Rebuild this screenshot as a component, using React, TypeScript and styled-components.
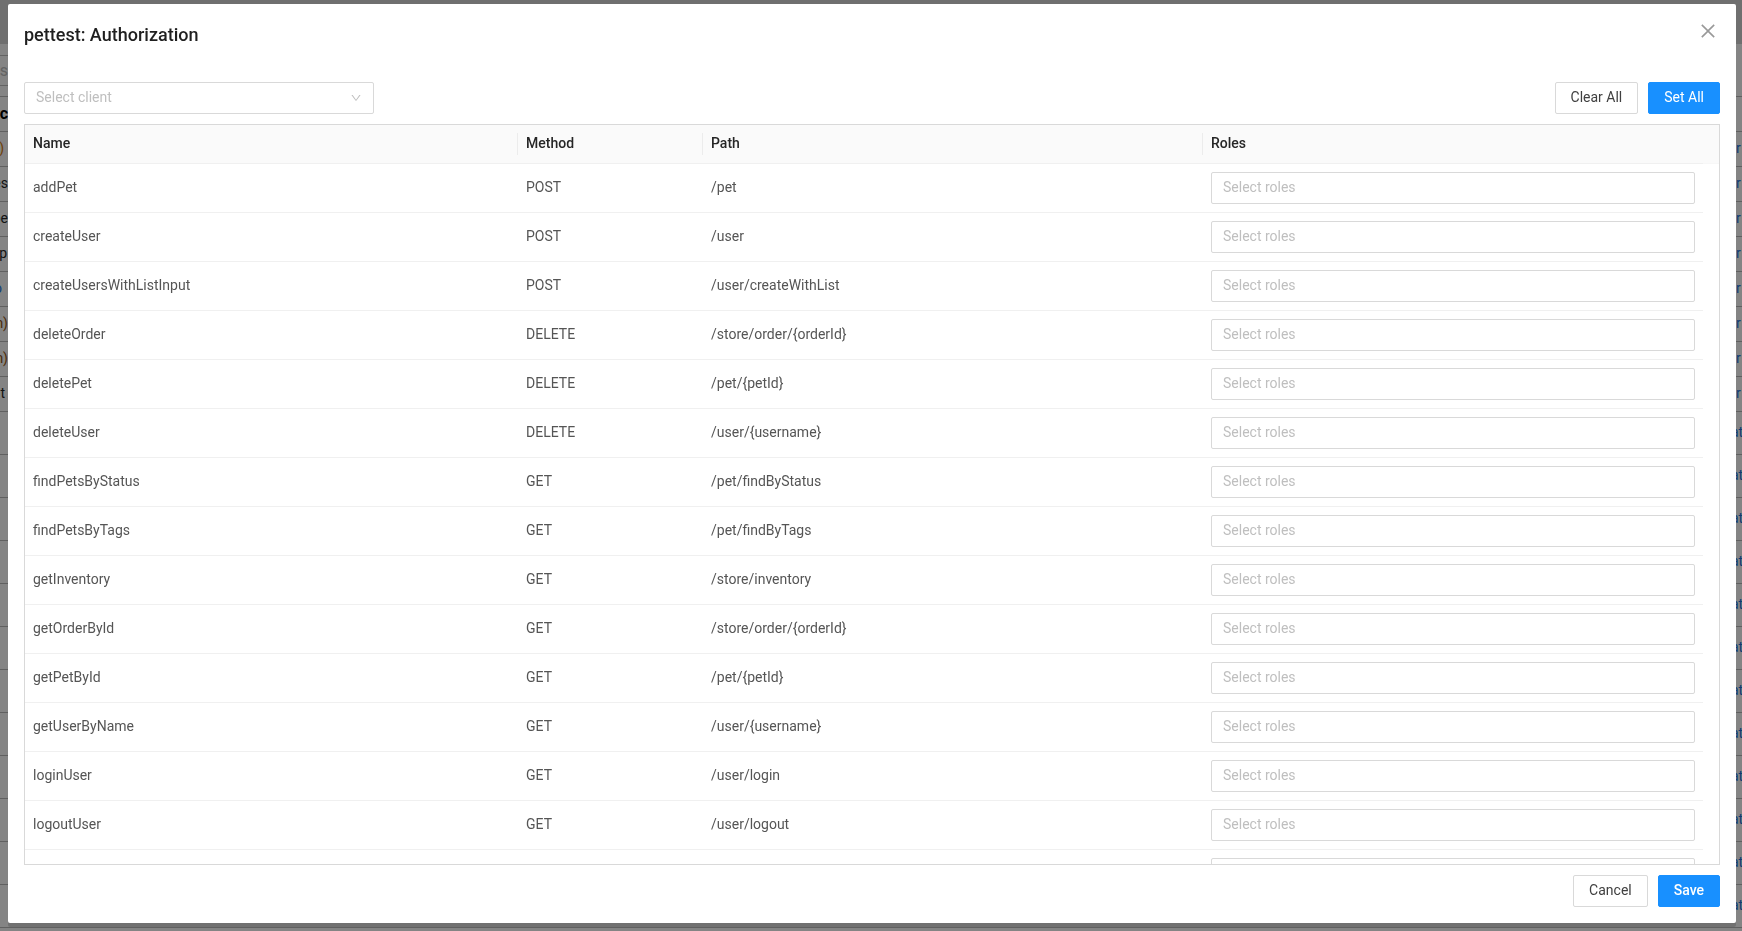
import React from 'react';
import styled, { createGlobalStyle } from 'styled-components';
import { AiOutlineClose, AiOutlineDown } from 'react-icons/ai';

const GlobalStyle = createGlobalStyle`
  html, body {
    margin: 0;
    padding: 0;
    height: 100%;
    overflow: hidden;
    background: #f0f0f0;
    font-family: Roboto, "Liberation Sans", sans-serif;
    font-size: 14px;
    color: #555;
  }
  * {
    box-sizing: border-box;
  }
`;

/* page behind the dialog */
const Page = styled.div`
  height: 931px;
  overflow: hidden;
  background: #f0f0f0;
`;

const TopBar = styled.div`
  height: 44px;
  background: #cbcbcb;
`;

const SearchArea = styled.div`
  height: 52px;
  padding-top: 11px;
`;

const SearchInput = styled.div`
  display: flex;
  align-items: center;
  justify-content: flex-end;
  width: 8px;
  height: 31px;
  border-top: 1px solid #b4b4b4;
  border-bottom: 1px solid #b4b4b4;
  font-size: 16px;
  color: #b4b4b4;
`;

const BackRow = styled.div<{ $height: number; $head?: boolean }>`
  display: flex;
  align-items: center;
  justify-content: space-between;
  height: ${({ $height }) => $height}px;
  padding-bottom: 2px;
  border-top: ${({ $head }) => ($head ? '1px solid #b0b0b0' : 'none')};
  border-bottom: 1px solid #b0b0b0;
  font-size: 14px;
`;

const BackLeft = styled.span<{ $tone: string; $bold?: boolean; $inset?: number }>`
  display: flex;
  justify-content: flex-end;
  width: 8px;
  padding-right: ${({ $inset }) => $inset ?? 0}px;
  white-space: nowrap;
  color: ${({ $tone }) => $tone};
  font-weight: ${({ $bold }) => ($bold ? 700 : 400)};
  font-size: ${({ $bold }) => ($bold ? 16 : 14)}px;
`;

const BackLink = styled.span<{ $shift: number }>`
  width: 6px;
  overflow: hidden;
  white-space: nowrap;
  color: #1a6fd0;
  text-indent: ${({ $shift }) => $shift}px;
`;

const Mask = styled.div`
  position: fixed;
  inset: 0;
  background: rgba(0, 0, 0, 0.45);
`;

/* dialog */
const Modal = styled.div`
  position: fixed;
  top: 4px;
  left: 8px;
  display: flex;
  flex-direction: column;
  width: 1728px;
  height: 919px;
  padding: 0 16px 16px;
  background: #fff;
  border-radius: 2px;
  box-shadow: 0 4px 0 rgba(0, 0, 0, 0.15);
`;

const CloseButton = styled.button`
  position: absolute;
  top: 0;
  right: 0;
  display: flex;
  align-items: center;
  justify-content: center;
  width: 56px;
  height: 54px;
  padding: 0;
  border: none;
  background: transparent;
  color: #999;
  font-size: 20px;
  cursor: pointer;
`;

const Title = styled.div`
  height: 78px;
  padding-top: 20px;
  font-size: 18px;
  line-height: 22px;
  font-weight: 500;
  color: #1f1f1f;
`;

const Toolbar = styled.div`
  display: flex;
  align-items: center;
  justify-content: space-between;
  margin-bottom: 10px;
`;

const ButtonGroup = styled.div`
  display: flex;
  gap: 10px;
`;

const Button = styled.button<{ $primary?: boolean; $regular?: boolean }>`
  height: 32px;
  padding: 0 15px 2px;
  border: 1px solid ${({ $primary }) => ($primary ? '#1890ff' : '#d9d9d9')};
  border-radius: 2px;
  background: ${({ $primary }) => ($primary ? '#1890ff' : '#fff')};
  color: ${({ $primary }) => ($primary ? '#fff' : '#404040')};
  font-family: inherit;
  font-size: 14px;
  font-weight: ${({ $primary, $regular }) => ($primary && !$regular ? 500 : 400)};
  cursor: pointer;
`;

const ClientSelect = styled.div`
  display: flex;
  align-items: center;
  justify-content: space-between;
  width: 350px;
  height: 32px;
  padding: 0 11px;
  border: 1px solid #d9d9d9;
  border-radius: 2px;
  color: #bfbfbf;
  font-size: 12px;
`;

const Placeholder = styled.span`
  margin-bottom: 2px;
  font-size: 14px;
  color: #bfbfbf;
`;

const TableFrame = styled.div`
  flex: 1;
  min-height: 0;
  overflow: hidden;
  border: 1px solid #d9d9d9;
`;

const HeadRow = styled.div`
  display: grid;
  grid-template-columns: 493px 185px 500px 500px 16px;
  height: 39px;
  background: #fafafa;
`;

const HeadCell = styled.div<{ $last?: boolean; $gutter?: boolean }>`
  position: relative;
  display: flex;
  align-items: center;
  padding: 0 8px 2px;
  border-bottom: 1px solid ${({ $gutter }) => ($gutter ? '#f7f7f7' : '#f0f0f0')};
  font-weight: 500;
  color: #262626;

  &::after {
    content: '';
    display: ${({ $last }) => ($last ? 'none' : 'block')};
    position: absolute;
    top: 8px;
    right: 0;
    width: 1px;
    height: 22px;
    background: #ececec;
  }
`;

const BodyRow = styled.div`
  display: grid;
  grid-template-columns: 493px 185px 500px 500px;
  height: 49px;
`;

const BodyCell = styled.div`
  display: flex;
  align-items: center;
  padding: 0 8px;
  border-bottom: 1px solid #f0f0f0;
`;

const CellText = styled.span`
  margin-bottom: 2px;
`;

const RoleSelect = styled.div`
  display: flex;
  align-items: center;
  width: 100%;
  height: 32px;
  padding: 0 11px;
  border: 1px solid #d9d9d9;
  border-radius: 2px;
`;

const Footer = styled.div`
  display: flex;
  justify-content: flex-end;
  gap: 10px;
  margin-top: 10px;
`;

const backRows = [
  { left: 'c', tone: '#000', bold: true },
  { left: ')', tone: '#c9720c', link: 'r', inset: 4 },
  { left: 'es', tone: '#262626', link: 'r' },
  { left: 'pe', tone: '#262626', link: 'r' },
  { left: 'p', tone: '#262626', link: 'r', inset: 1 },
  { left: 'o', tone: '#1a6fd0', link: 'r', inset: 6 },
  { left: 'n)', tone: '#8a4f10', link: 'r' },
  { left: 'n)', tone: '#8a4f10', link: 'r' },
  { left: 't', tone: '#262626', link: 'r', inset: 3 }
];

const operations = [
  { name: 'addPet', method: 'POST', path: '/pet' },
  { name: 'createUser', method: 'POST', path: '/user' },
  { name: 'createUsersWithListInput', method: 'POST', path: '/user/createWithList' },
  { name: 'deleteOrder', method: 'DELETE', path: '/store/order/{orderId}' },
  { name: 'deletePet', method: 'DELETE', path: '/pet/{petId}' },
  { name: 'deleteUser', method: 'DELETE', path: '/user/{username}' },
  { name: 'findPetsByStatus', method: 'GET', path: '/pet/findByStatus' },
  { name: 'findPetsByTags', method: 'GET', path: '/pet/findByTags' },
  { name: 'getInventory', method: 'GET', path: '/store/inventory' },
  { name: 'getOrderById', method: 'GET', path: '/store/order/{orderId}' },
  { name: 'getPetById', method: 'GET', path: '/pet/{petId}' },
  { name: 'getUserByName', method: 'GET', path: '/user/{username}' },
  { name: 'loginUser', method: 'GET', path: '/user/login' },
  { name: 'logoutUser', method: 'GET', path: '/user/logout' },
  { name: 'placeOrder', method: 'POST', path: '/store/order' }
];

const App: React.FC = () => {
  return (
    <>
      <GlobalStyle />
      <Page>
        <TopBar />
        <SearchArea>
          <SearchInput>s</SearchInput>
        </SearchArea>
        {backRows.map((row, i) => (
          <BackRow key={i} $height={i === 0 ? 36 : 35} $head={i === 0}>
            <BackLeft $tone={row.tone} $bold={row.bold} $inset={row.inset}>{row.left}</BackLeft>
            <BackLink $shift={0}>{row.link}</BackLink>
          </BackRow>
        ))}
        {Array.from({ length: 13 }).map((_, i) => (
          <BackRow key={i} $height={43}>
            <span />
            <BackLink $shift={-5}>at</BackLink>
          </BackRow>
        ))}
      </Page>
      <Mask />
      <Modal>
        <CloseButton aria-label="Close">
          <AiOutlineClose />
        </CloseButton>
        <Title>pettest: Authorization</Title>
        <Toolbar>
          <ClientSelect>
            <Placeholder>Select client</Placeholder>
            <AiOutlineDown />
          </ClientSelect>
          <ButtonGroup>
            <Button>Clear All</Button>
            <Button $primary $regular>Set All</Button>
          </ButtonGroup>
        </Toolbar>
        <TableFrame>
          <HeadRow>
            <HeadCell>Name</HeadCell>
            <HeadCell>Method</HeadCell>
            <HeadCell>Path</HeadCell>
            <HeadCell $last>Roles</HeadCell>
            <HeadCell $last $gutter />
          </HeadRow>
          {operations.map((op) => (
            <BodyRow key={op.name}>
              <BodyCell><CellText>{op.name}</CellText></BodyCell>
              <BodyCell><CellText>{op.method}</CellText></BodyCell>
              <BodyCell><CellText>{op.path}</CellText></BodyCell>
              <BodyCell>
                <RoleSelect>
                  <Placeholder>Select roles</Placeholder>
                </RoleSelect>
              </BodyCell>
            </BodyRow>
          ))}
        </TableFrame>
        <Footer>
          <Button>Cancel</Button>
          <Button $primary>Save</Button>
        </Footer>
      </Modal>
    </>
  );
};

export default App;
